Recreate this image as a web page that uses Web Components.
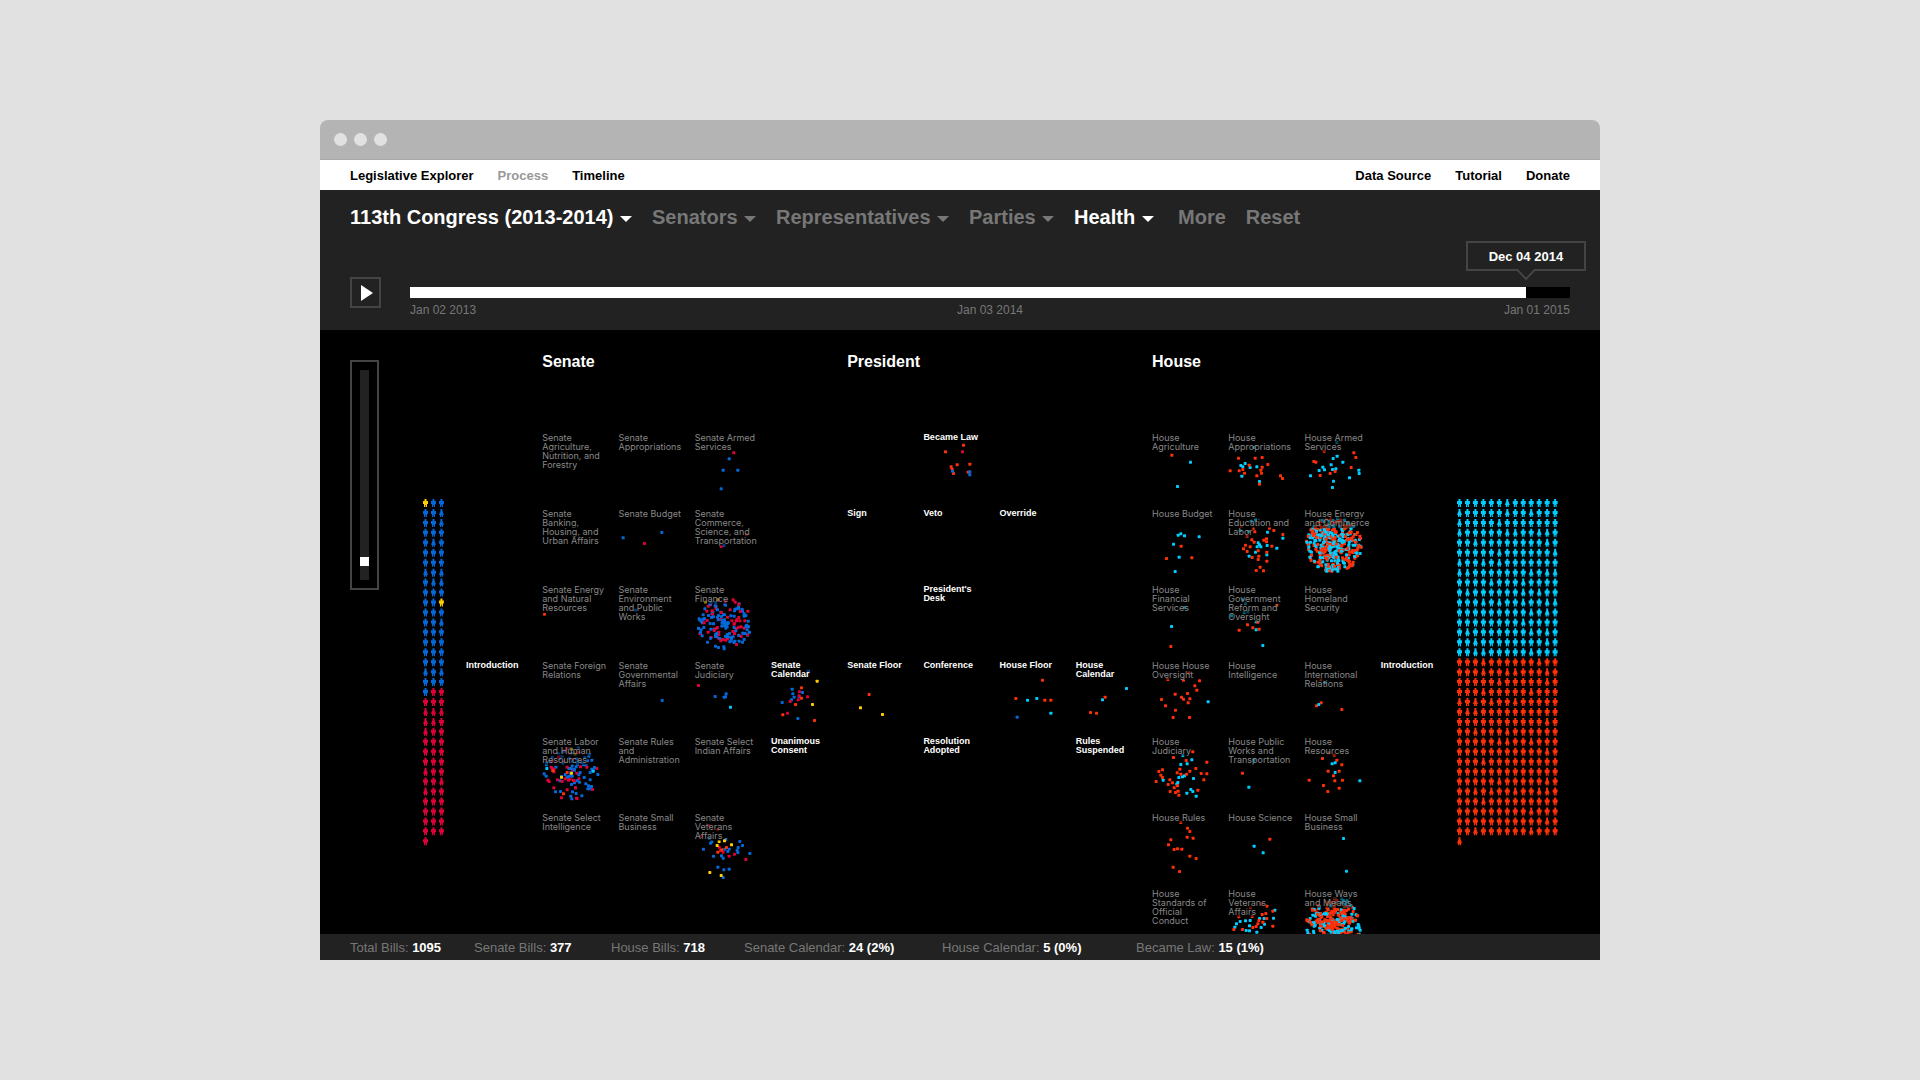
<!DOCTYPE html>
<html lang="en">
<head>
<meta charset="utf-8">
<title>Legislative Explorer</title>
<style>
  html, body {
    height: 100%;
  }

  body {
    margin: 0;
    padding: 120px 0;
    box-sizing: border-box;
    display: flex;
    justify-content: center;
    background: #e1e1e1;
    font-family: "Liberation Sans", Arial, sans-serif;
  }

  app-window {
    width: calc(100% * 2 / 3);
  }
</style>
</head>
<body>

<app-window>
  <site-nav></site-nav>
  <filter-panel></filter-panel>
  <process-map></process-map>
  <bill-stats></bill-stats>
</app-window>

<script>
// Bill and member colours
const COLORS = {
  b: "#0468d8", // Senate Democrat
  r: "#e00038", // Senate Republican
  y: "#ffcc00", // Independent
  c: "#00ccff", // House Democrat
  o: "#ff3008", // House Republican
};

// Small repeatable generator, so the dense clusters keep their shape
function createRandom(seed) {
  let s = seed;
  return () => {
    s = (s * 16807) % 2147483647;
    return s / 2147483647;
  };
}

// Window frame with a title bar
class AppWindow extends HTMLElement {
  constructor() {
    super();
    this.attachShadow({ mode: "open" });
    this.shadowRoot.innerHTML = `
      <style>
        :host {
          display: flex;
          flex-direction: column;
          overflow: hidden;
          border-radius: 8px 8px 0 0;
        }

        .bar {
          display: flex;
          flex: none;
          align-items: center;
          gap: 7px;
          height: 40px;
          padding: 0 14px;
          box-sizing: border-box;
          background: #b4b4b4;
          border-bottom: 1px solid #a8a8a8;
        }

        .bar span {
          width: 13px;
          height: 13px;
          border-radius: 50%;
          background: #e1e1e1;
        }
      </style>
      <div class="bar"><span></span><span></span><span></span></div>
      <slot></slot>
    `;
  }
}
customElements.define("app-window", AppWindow);

class SiteNav extends HTMLElement {
  constructor() {
    super();
    this.attachShadow({ mode: "open" });
    this.shadowRoot.innerHTML = `
      <style>
        :host {
          display: block;
          flex: none;
          background: #fff;
        }

        nav {
          display: flex;
          justify-content: space-between;
          padding: 2px 30px 0;
          line-height: 28px;
          font-size: 13px;
          font-weight: bold;
        }

        div {
          display: flex;
          gap: 24px;
        }

        a {
          color: #000;
          text-decoration: none;
        }

        a.current {
          color: #999;
        }
      </style>
      <nav>
        <div>
          <a href="#home">Legislative Explorer</a>
          <a href="#process" class="current">Process</a>
          <a href="#timeline">Timeline</a>
        </div>
        <div>
          <a href="#data">Data Source</a>
          <a href="#tutorial">Tutorial</a>
          <a href="#donate">Donate</a>
        </div>
      </nav>
    `;
  }
}
customElements.define("site-nav", SiteNav);

// Drop-down with a caret after its current value
class FilterMenu extends HTMLElement {
  constructor() {
    super();
    this.attachShadow({ mode: "open" });
  }

  connectedCallback() {
    const label = this.getAttribute("label");
    const value = this.getAttribute("value") || label;
    this.shadowRoot.innerHTML = `
      <style>
        :host {
          display: flex;
          align-items: center;
          gap: 6px;
          color: #777;
        }

        :host([active]) {
          color: #fff;
        }

        select {
          appearance: none;
          margin: 0;
          padding: 0;
          border: 0;
          outline: 0;
          background: none;
          color: inherit;
          font: inherit;
          cursor: pointer;
        }

        svg {
          display: block;
          margin-top: 3px;
          pointer-events: none;
        }
      </style>
      <select aria-label="${label}"><option>${value}</option></select>
      <svg width="12" height="6" viewBox="0 0 12 6"><path d="M0 0h12l-6 6z" fill="currentColor"/></svg>
    `;
  }
}
customElements.define("filter-menu", FilterMenu);

// Date scrubber with a callout above the current day
class TimeSlider extends HTMLElement {
  constructor() {
    super();
    this.attachShadow({ mode: "open" });
    this.shadowRoot.innerHTML = `
      <style>
        :host {
          --at: 96.2%;
          display: block;
          flex: 1;
          padding-top: 10px;
        }

        .track {
          position: relative;
          height: 11px;
        }

        input {
          appearance: none;
          display: block;
          width: 100%;
          height: 11px;
          margin: 0;
          background: linear-gradient(to right, #fff var(--at), #000 var(--at));
        }

        input::-webkit-slider-thumb {
          appearance: none;
          width: 1px;
          height: 11px;
          background: #fff;
        }

        .callout {
          position: absolute;
          left: var(--at);
          bottom: 27px;
          width: 120px;
          height: 30px;
          margin-left: -60px;
          box-sizing: border-box;
          border: 2px solid #444;
          background: #222;
          color: #fff;
          font-size: 13px;
          font-weight: bold;
          line-height: 28px;
          text-align: center;
        }

        .callout svg {
          position: absolute;
          left: 48px;
          top: 26px;
        }

        .dates {
          display: flex;
          justify-content: space-between;
          margin-top: 4px;
          color: #777;
          font-size: 12px;
          line-height: 16px;
        }
      </style>
      <div class="track">
        <input type="range" min="0" max="1000" value="962" aria-label="Date">
        <output class="callout">Dec 04 2014<svg width="20" height="12" viewBox="0 0 20 12">
          <path d="M0 0h20v2h-1l-9 9-9-9H0z" fill="#222"/>
          <path d="M0 1h1.500l8.500 9 8.500-9H20" fill="none" stroke="#444" stroke-width="2"/>
        </svg></output>
      </div>
      <div class="dates"><span>Jan 02 2013</span><span>Jan 03 2014</span><span>Jan 01 2015</span></div>
    `;
  }
}
customElements.define("time-slider", TimeSlider);

class FilterPanel extends HTMLElement {
  constructor() {
    super();
    this.attachShadow({ mode: "open" });
    this.shadowRoot.innerHTML = `
      <style>
        :host {
          display: block;
          flex: none;
          padding: 14px 30px 12px;
          background: #222;
        }

        .filters {
          display: flex;
          gap: 20px;
          height: 26px;
          font-size: 20px;
          font-weight: bold;
          line-height: 26px;
        }

        .filters button {
          padding: 0;
          border: 0;
          background: none;
          color: #777;
          font: inherit;
          cursor: pointer;
        }

        .filters filter-menu + button {
          margin-left: 4px;
        }

        .time {
          display: flex;
          align-items: flex-start;
          gap: 29px;
          margin-top: 47px;
        }

        .play {
          width: 31px;
          height: 31px;
          padding: 0;
          border: 2px solid #444;
          background: none;
        }

        .play svg {
          display: block;
          margin: 0 0 0 9px;
        }
      </style>
      <div class="filters">
        <filter-menu label="Congress" value="113th Congress (2013-2014)" active></filter-menu>
        <filter-menu label="Senators"></filter-menu>
        <filter-menu label="Representatives"></filter-menu>
        <filter-menu label="Parties"></filter-menu>
        <filter-menu label="Topic" value="Health" active></filter-menu>
        <button type="button">More</button>
        <button type="button">Reset</button>
      </div>
      <div class="time">
        <button type="button" class="play" aria-label="Play">
          <svg width="12" height="16" viewBox="0 0 12 16"><path d="M0 0l12 8-12 8z" fill="#fff"/></svg>
        </button>
        <time-slider></time-slider>
      </div>
    `;
  }
}
customElements.define("filter-panel", FilterPanel);

// Block of members, one figure each, filled row by row.
// Attributes: columns, members ("b:12 r:3 ...")
class MemberBlock extends HTMLElement {
  constructor() {
    super();
    this.attachShadow({ mode: "open" });
  }

  connectedCallback() {
    const columns = Number(this.getAttribute("columns"));
    const members = this.getAttribute("members").split(" ").flatMap((run) => {
      const [party, count] = run.split(":");
      return Array(Number(count)).fill(party);
    });
    const rows = Math.ceil(members.length / columns);
    const stepX = 7.97;
    const stepY = 9.95;
    const width = columns * 8 - 3;
    const height = rows * 10;
    const random = createRandom(columns * 104729);

    const figures = members.map((party, i) => {
      const x = (i % columns) * stepX;
      const y = Math.floor(i / columns) * stepY;
      const shape = random() < 0.2 ? "woman" : "man";
      return `<use href="#${shape}" x="${x.toFixed(2)}" y="${y.toFixed(2)}" fill="${COLORS[party]}"/>`;
    });

    this.shadowRoot.innerHTML = `
      <style>
        :host {
          display: block;
          flex: none;
          margin-top: 147px;
        }

        svg {
          display: block;
        }
      </style>
      <svg width="${width}" height="${height}" viewBox="0 0 ${width} ${height}">
        <defs>
          <path id="man" d="M1.500 0h2v2H5v3H4v3H2.800V6h-.6v2H1V5H0V2h1.500z"/>
          <path id="woman" d="M1.500 0h2v2L5 6H4v2H2.800V6.500h-.6V8H1V6H0l1.500-4z"/>
        </defs>
        ${figures.join("")}
      </svg>
    `;
  }
}
customElements.define("member-block", MemberBlock);

// One stage of the process: a label and the bills that sit there.
// Bill positions are in thirds of a pixel from the label's first line.
class StageCell extends HTMLElement {
  constructor() {
    super();
    this.attachShadow({ mode: "open" });
  }

  set stage(stage) {
    const { name, col, row, bills = {}, cloud } = stage;
    this.style.gridColumn = col;
    this.style.gridRow = row + 1;
    if (col === 1 || (col > 4 && col < 10) || col === 13) {
      this.setAttribute("strong", "");
    }

    const dots = [];
    if (cloud) {
      dots.push(...this.scatter(cloud, col * 100 + row));
    }
    for (const [party, points] of Object.entries(bills)) {
      for (const point of points.split(" ")) {
        const [x, y] = point.split(",");
        dots.push(this.dot(x, y, party));
      }
    }

    this.shadowRoot.innerHTML = `
      <style>
        :host {
          display: block;
          position: relative;
          color: #888;
          font-family: Inter, "Liberation Sans", sans-serif;
          font-size: 9px;
          line-height: 9px;
        }

        :host([strong]) {
          color: #fff;
          font-family: "Liberation Sans", Arial, sans-serif;
          font-weight: bold;
        }

        svg {
          position: absolute;
          top: 0;
          left: 0;
        }

        span {
          position: relative;
          white-space: pre;
          background: rgba(0, 0, 0, 0.45);
        }
      </style>
      ${dots.length ? `<svg width="76" height="76" viewBox="0 -14 228 228">${dots.join("")}</svg>` : ""}
      <span>${name}</span>
    `;
  }

  dot(x, y, party) {
    return `<rect x="${x - 4}" y="${y - 4}" width="9" height="9" rx="2" fill="${COLORS[party]}"/>`;
  }

  // Fills a disc, a bit denser towards its middle
  scatter({ x, y, radius, count, parties }, seed) {
    const random = createRandom(seed * 7919);
    const dots = [];
    for (let i = 0; i < count; i++) {
      const angle = random() * Math.PI * 2;
      const distance = Math.pow(random(), 0.65) * radius;
      const party = parties[Math.floor(random() * parties.length)];
      dots.push(this.dot(
        Math.round(x + Math.cos(angle) * distance),
        Math.round(y + Math.sin(angle) * distance),
        party
      ));
    }
    return dots;
  }
}
customElements.define("stage-cell", StageCell);

const STAGES = [
  { name: "Introduction", col: 1, row: 4 },

  { name: "Senate\nAgriculture,\nNutrition, and\nForestry", col: 2, row: 1 },
  { name: "Senate\nAppropriations", col: 3, row: 1 },
  { name: "Senate Armed\nServices", col: 4, row: 1, bills: {
    r: "116,45", b: "102,63 84,97 128,97 78,153" } },
  { name: "Senate\nBanking,\nHousing, and\nUrban Affairs", col: 2, row: 2 },
  { name: "Senate Budget", col: 3, row: 2, bills: { b: "15,72 131,56", r: "79,89" } },
  { name: "Senate\nCommerce,\nScience, and\nTransportation", col: 4, row: 2, bills: {
    o: "154,63", b: "86,94", r: "78,98" } },
  { name: "Senate Energy\nand Natural\nResources", col: 2, row: 3, bills: { o: "7,73" } },
  { name: "Senate\nEnvironment\nand Public\nWorks", col: 3, row: 3, bills: { b: "52,62" } },
  { name: "Senate\nFinance", col: 4, row: 3,
    cloud: { x: 88, y: 101, radius: 80, count: 165, parties: "bbbrr" },
    bills: { y: "31,37 69,29" } },
  { name: "Senate Foreign\nRelations", col: 2, row: 4 },
  { name: "Senate\nGovernmental\nAffairs", col: 3, row: 4, bills: { b: "132,104" } },
  { name: "Senate\nJudiciary", col: 4, row: 4, bills: {
    r: "10,59", b: "60,92 93,84 87,94 91,93", c: "106,124" } },
  { name: "Senate Labor\nand Human\nResources", col: 2, row: 5,
    cloud: { x: 86, y: 94, radius: 82, count: 110, parties: "bbr" },
    bills: { y: "88,22 99,37 58,106 88,94", c: "14,80 153,88", o: "33,86 64,156 75,92" } },
  { name: "Senate Rules\nand\nAdministration", col: 3, row: 5 },
  { name: "Senate Select\nIndian Affairs", col: 4, row: 5 },
  { name: "Senate Select\nIntelligence", col: 2, row: 6 },
  { name: "Senate Small\nBusiness", col: 3, row: 6 },
  { name: "Senate\nVeterans\nAffairs", col: 4, row: 6, bills: {
    b: "25,94 46,76 50,72 42,62 92,65 134,71 142,83 129,89 126,98 128,104 164,107 55,115 79,114 84,121 98,101 102,94 89,94 68,148 86,156 102,154 84,179",
    r: "41,23 17,56 72,88 76,98 102,115 118,109 152,125 84,103",
    o: "94,89 68,103 80,96 68,36",
    y: "72,71 88,69 66,83 109,81 44,164 78,173" } },

  { name: "Senate\nCalendar", col: 5, row: 4, bills: {
    b: "111,16 63,70 65,84 94,80 69,94 84,92 61,102 33,110 80,158",
    r: "85,78 84,90 109,93 81,102 57,107 49,142",
    o: "91,66 91,97 73,116 35,147 130,164",
    y: "138,46 124,116" } },
  { name: "Unanimous\nConsent", col: 5, row: 5 },
  { name: "Sign", col: 6, row: 2 },
  { name: "Senate Floor", col: 6, row: 4, bills: { o: "66,86", y: "40,126 106,146" } },
  { name: "Became Law", col: 7, row: 1, bills: {
    o: "121,22 67,42 102,81 84,87 87,94 91,107 140,79 135,103",
    r: "118,42", b: "88,100 140,102 140,111" } },
  { name: "Veto", col: 7, row: 2 },
  { name: "President's\nDesk", col: 7, row: 3 },
  { name: "Conference", col: 7, row: 4 },
  { name: "Resolution\nAdopted", col: 7, row: 5 },
  { name: "Override", col: 8, row: 2 },
  { name: "House Floor", col: 8, row: 4, bills: {
    o: "127,43 47,98 134,103 152,103", c: "82,103 110,98 152,142", b: "51,154" } },
  { name: "House\nCalendar", col: 9, row: 4, bills: {
    c: "151,68 79,102", o: "87,94 43,140 61,142" } },
  { name: "Rules\nSuspended", col: 9, row: 5 },

  { name: "House\nAgriculture", col: 10, row: 1, bills: { o: "59,52", c: "115,73 76,146" } },
  { name: "House\nAppropriations", col: 11, row: 1, bills: {
    c: "77,29 51,77 38,83 44,87 41,115 66,89 86,87 94,131",
    o: "31,61 81,61 102,59 119,80 6,99 33,99 44,95 49,106 63,82 102,88 98,97 100,106 86,114 94,139 157,114 163,122" } },
  { name: "House Armed\nServices", col: 12, row: 1, bills: {
    c: "95,13 96,55 84,62 113,73 78,81 53,88 58,96 42,98 82,95 92,93 16,114 85,130 82,149 133,120 161,97 162,107",
    o: "57,40 26,71 32,73 146,45 152,59 138,89 90,101 75,107 45,113" } },
  { name: "House Budget", col: 10, row: 2, bills: {
    c: "78,64 86,60 97,66 141,69 64,91 81,130 69,173", o: "87,97 43,134 119,132" } },
  { name: "House\nEducation and\nLabor", col: 11, row: 2, bills: {
    c: "82,17 69,22 61,53 118,55 164,73 90,87 94,93 87,99 98,99 82,115 117,95 116,123 146,103 63,127 36,51",
    o: "39,38 75,44 80,54 57,67 124,43 137,50 164,62 71,78 78,85 52,94 46,105 57,113 107,79 115,75 115,84 131,97 66,99 90,111 92,127 90,137 72,131 116,115 116,142 96,160 84,170 106,171" } },
  { name: "House Energy\nand Commerce", col: 12, row: 2,
    cloud: { x: 86, y: 94, radius: 83, count: 400, parties: "co" } },
  { name: "House\nFinancial\nServices", col: 10, row: 3, bills: { c: "97,53 58,110", o: "56,170" } },
  { name: "House\nGovernment\nReform and\nOversight", col: 11, row: 3, bills: {
    c: "44,30 52,41 48,68 59,66 10,78 84,96 84,120 104,167",
    o: "146,46 89,97 58,105 74,114 33,121 93,118" } },
  { name: "House\nHomeland\nSecurity", col: 12, row: 3 },
  { name: "House House\nOversight", col: 10, row: 4, bills: {
    o: "47,41 94,43 110,21 142,45 128,60 134,73 69,85 106,83 88,94 94,100 113,99 108,111 28,101 40,120 70,133 63,155 112,155",
    c: "168,108" } },
  { name: "House\nIntelligence", col: 11, row: 4 },
  { name: "House\nInternational\nRelations", col: 12, row: 4, bills: {
    o: "47,41 48,111 34,120 110,131", c: "60,50 41,116" } },
  { name: "House\nJudiciary", col: 10, row: 5, bills: {
    c: "92,41 119,54 86,68 105,66 80,107 91,105 97,102 77,122 74,127 124,110 33,115 116,143 122,149 104,154 132,163",
    o: "122,30 64,47 102,56 164,61 131,80 147,95 164,96 155,114 83,82 75,93 86,97 113,88 103,97 31,84 20,89 26,100 31,107 12,119 53,114 48,128 61,123 66,138 76,132 54,149 70,152 78,148 80,160 137,145" } },
  { name: "House Public\nWorks and\nTransportation", col: 11, row: 5, bills: {
    c: "77,55 62,136", o: "43,94" } },
  { name: "House\nResources", col: 12, row: 5, bills: {
    o: "71,33 87,40 52,50 95,55 110,69 69,88 102,88 85,102 89,117 112,115 55,131 102,139 68,149 12,115",
    c: "81,66 90,63 90,92 164,117" } },
  { name: "House Rules", col: 10, row: 6, bills: {
    o: "86,14 106,31 113,41 105,58 123,61 56,66 49,81 66,95 76,93 89,94 113,115 132,122 63,148 82,161" } },
  { name: "House Science", col: 11, row: 6, bills: { o: "125,64", c: "78,85 105,105" } },
  { name: "House Small\nBusiness", col: 12, row: 6, bills: { c: "115,62 124,160" } },
  { name: "House\nStandards of\nOfficial\nConduct", col: 10, row: 7 },
  { name: "House\nVeterans\nAffairs", col: 11, row: 7, bills: {
    c: "140,49 136,73 94,74 108,74 66,80 52,81 36,83 25,90 20,100 64,96 54,110 64,111 99,101 109,91 86,115",
    o: "100,30 116,37 67,42 134,52 113,59 102,62 116,74 72,68 32,69 92,80 89,90 84,98 74,101 134,97 43,107 17,107 104,85" } },
  { name: "House Ways\nand Means", col: 12, row: 7,
    cloud: { x: 86, y: 93, radius: 82, count: 330, parties: "ccooo" } },

  { name: "Introduction", col: 13, row: 4 },
];

class ProcessMap extends HTMLElement {
  constructor() {
    super();
    this.attachShadow({ mode: "open" });
    this.shadowRoot.innerHTML = `
      <style>
        :host {
          display: flex;
          flex: 1;
          align-items: flex-start;
          min-height: 0;
          overflow: hidden;
          padding: 22px 42px 0 30px;
          box-sizing: border-box;
          background: #000;
        }

        .zoom {
          display: flex;
          flex: none;
          justify-content: center;
          align-items: center;
          width: 29px;
          height: 230px;
          margin: 8px 44px 0 0;
          box-sizing: border-box;
          border: 2px solid #444;
        }

        .zoom input {
          appearance: none;
          writing-mode: vertical-lr;
          width: 9px;
          height: 210px;
          margin: 0;
          background: #222;
        }

        .zoom input::-webkit-slider-thumb {
          appearance: none;
          width: 9px;
          height: 9px;
          background: #fff;
        }

        .stages {
          display: grid;
          flex: 1;
          grid-template-columns: repeat(13, minmax(0, 1fr));
          grid-template-rows: 81px;
          grid-auto-rows: 76px;
          margin-left: 22px;
        }

        h2 {
          grid-row: 1;
          margin: 0;
          color: #fff;
          font-size: 16px;
          line-height: 20px;
        }

        .senate { grid-column: 2 / 6; }
        .president { grid-column: 6 / 10; }
        .house { grid-column: 10 / 14; }
      </style>
      <label class="zoom"><input type="range" min="0" max="100" value="93" aria-label="Zoom"></label>
      <member-block columns="3" members="y:1 b:31 y:1 b:25 r:45"></member-block>
      <div class="stages">
        <h2 class="senate">Senate</h2>
        <h2 class="president">President</h2>
        <h2 class="house">House</h2>
      </div>
      <member-block columns="13" members="c:208 o:235"></member-block>
    `;

    const stages = this.shadowRoot.querySelector(".stages");
    for (const stage of STAGES) {
      const cell = document.createElement("stage-cell");
      cell.stage = stage;
      stages.append(cell);
    }
  }
}
customElements.define("process-map", ProcessMap);

class BillStats extends HTMLElement {
  constructor() {
    super();
    this.attachShadow({ mode: "open" });
    this.shadowRoot.innerHTML = `
      <style>
        :host {
          display: grid;
          flex: none;
          grid-template-columns: 124px 137px 133px 198px 194px auto;
          padding: 2px 30px 0;
          background: #222;
          color: #777;
          font-size: 13px;
          line-height: 24px;
        }

        b {
          color: #fff;
        }
      </style>
      <span>Total Bills: <b>1095</b></span>
      <span>Senate Bills: <b>377</b></span>
      <span>House Bills: <b>718</b></span>
      <span>Senate Calendar: <b>24 (2%)</b></span>
      <span>House Calendar: <b>5 (0%)</b></span>
      <span>Became Law: <b>15 (1%)</b></span>
    `;
  }
}
customElements.define("bill-stats", BillStats);
</script>
</body>
</html>
